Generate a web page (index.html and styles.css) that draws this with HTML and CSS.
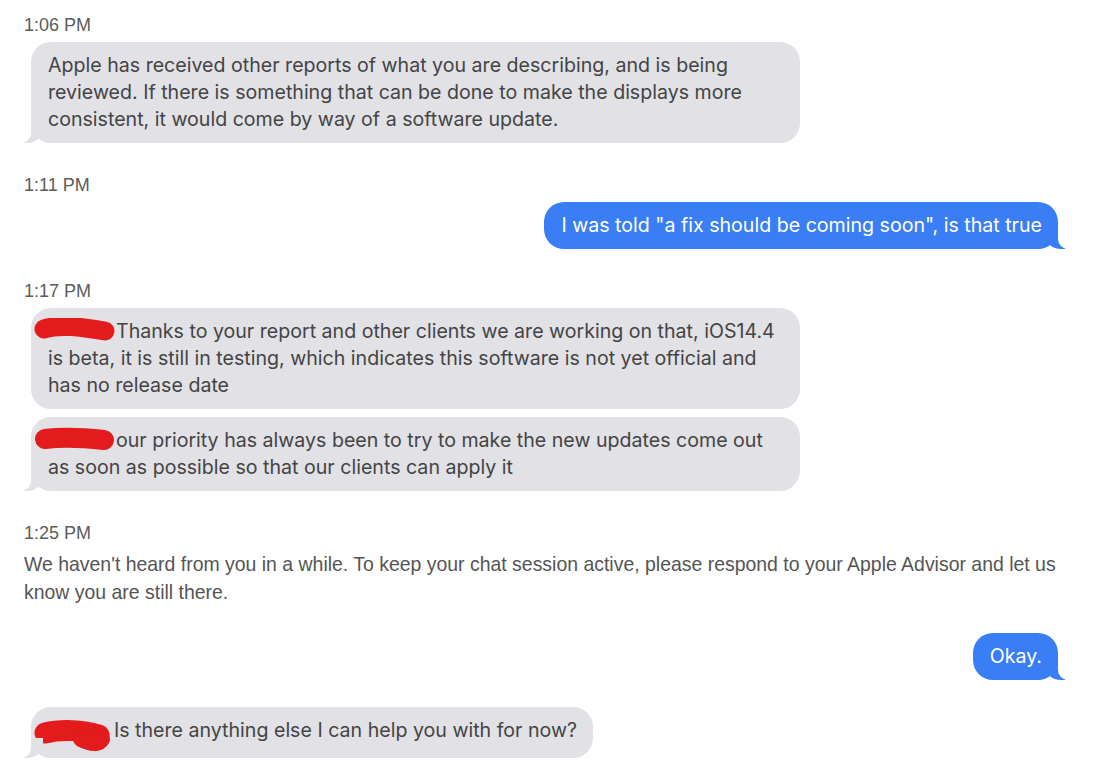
FILE: index.html
```html
<!DOCTYPE html>
<html>
<head>
    <title>Apple Support Chat</title>
    <link rel="stylesheet" href="styles.css">
</head>
<body>
    <div class="chat">
        <div class="stamp">1:06 PM</div>
        <div class="msg in tail">Apple has received other reports of what you are describing, and is being reviewed. If there is something that can be done to make the displays more consistent, it would come by way of a software update.</div>

        <div class="stamp">1:11 PM</div>
        <div class="msg out tail">I was told "a fix should be coming soon", is that true</div>

        <div class="stamp">1:17 PM</div>
        <div class="msg in"><span class="redact"><svg width="83" height="26" viewBox="0 0 83 26"><path d="M11 11 C 26 6, 48 9, 72 13" stroke="#e31b1d" stroke-width="19" stroke-linecap="round" fill="none"/></svg></span>Thanks to your report and other clients we are working on that, iOS14.4 is beta, it is still in testing, which indicates this software is not yet official and has no release date</div>
        <div class="msg in tail close"><span class="redact"><svg width="83" height="26" viewBox="0 0 83 26"><path d="M12 12 C 30 10, 52 11, 71 13" stroke="#e31b1d" stroke-width="20" stroke-linecap="round" fill="none"/></svg></span>our priority has always been to try to make the new updates come out as soon as possible so that our clients can apply it</div>

        <div class="stamp">1:25 PM</div>
        <div class="notice">We haven't heard from you in a while. To keep your chat session active, please respond to your Apple Advisor and let us know you are still there.</div>

        <div class="msg out tail gap">Okay.</div>

        <div class="msg in tail gap"><span class="redact tall"><svg width="81" height="32" viewBox="0 0 81 32"><path d="M12 13 C 28 9, 50 10, 66 15" stroke="#e31b1d" stroke-width="21" stroke-linecap="round" fill="none"/><path d="M48 19 C 58 24, 66 25, 69 19" stroke="#e31b1d" stroke-width="16" stroke-linecap="round" fill="none"/></svg></span>Is there anything else I can help you with for now?</div>
    </div>
</body>
</html>
```

FILE: styles.css
```css
body {
    margin: 0;
    background-color: white;
    font-family: "Liberation Sans", Arial, sans-serif;
}
.chat {
    display: flex;
    flex-direction: column;
    align-items: flex-start;
    padding: 15px 41px 20px 24px;
}
.stamp {
    font-size: 18px;
    line-height: 20px;
    color: #5c5c5c;
    margin-bottom: 7px;
}
.msg + .stamp {
    margin-top: 32px;
}
.notice {
    font-size: 19.45px;
    line-height: 28px;
    color: #555;
}
.msg {
    position: relative;
    box-sizing: border-box;
    max-width: 769px;
    padding: 10px 16px 10px 17px;
    border-radius: 20px;
    font-family: Inter, "Noto Sans", sans-serif;
    font-size: 19.6px;
    line-height: 27px;
}
.in {
    margin-left: 7px;
    background-color: #e1e1e6;
    color: #444;
}
.out {
    align-self: flex-end;
    background-color: #3a7ef5;
    color: white;
}
.close {
    margin-top: 8px;
}
.gap {
    margin-top: 27px;
}
.redact {
    display: inline-block;
    margin-left: -15px;
    width: 83px;
    height: 26px;
    vertical-align: -6px;
}
.redact svg {
    display: block;
}
.redact.tall {
    width: 81px;
    height: 32px;
    margin-bottom: -4px;
    vertical-align: -11px;
}

/* bubble tails */
.tail::before,
.tail::after {
    content: "";
    position: absolute;
    bottom: 0;
    height: 20px;
}
.in.tail::before {
    left: -8px;
    width: 20px;
    background-color: #e1e1e6;
    border-bottom-right-radius: 16px 14px;
}
.in.tail::after {
    left: -26px;
    width: 26px;
    background-color: white;
    border-bottom-right-radius: 10px;
}
.out.tail::before {
    right: -7px;
    width: 20px;
    background-color: #3a7ef5;
    border-bottom-left-radius: 16px 14px;
}
.out.tail::after {
    right: -26px;
    width: 26px;
    background-color: white;
    border-bottom-left-radius: 10px;
}
```
